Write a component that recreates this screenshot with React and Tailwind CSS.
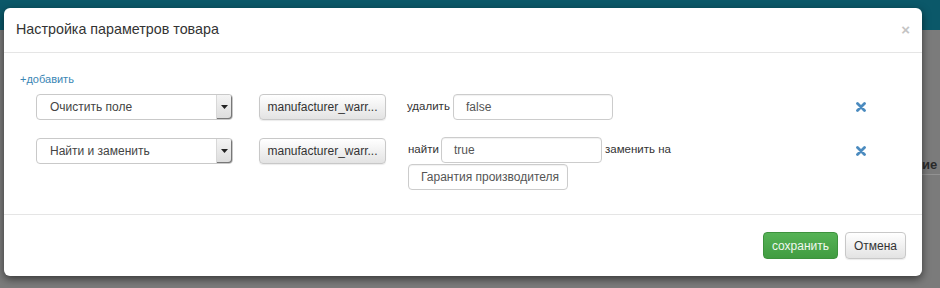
import React from "react";

const font = { fontFamily: '"Liberation Sans", Arial, sans-serif' };

function SelectBox({ label }) {
  return (
    <div className="flex h-[26px] w-[197px] items-stretch rounded-[4px] border border-[#c9c9c9] bg-white">
      <div className="flex flex-1 items-center pl-[13px] text-[12px] text-[#444]">{label}</div>
      <div className="flex w-[16px] items-center justify-center rounded-r-[3px] border-l border-[#d8d8d8] bg-gradient-to-b from-[#f4f4f4] to-[#dcdcdc] shadow-[inset_-1px_-1px_0_#777]">
        <svg width="7" height="4" viewBox="0 0 7 4">
          <path d="M0 0 H7 L3.5 4 Z" fill="#222" />
        </svg>
      </div>
    </div>
  );
}

function GrayButton({ children, className = "" }) {
  return (
    <div
      className={
        "flex items-center justify-center rounded-[4px] border border-[#c8c8c8] bg-gradient-to-b from-[#ffffff] to-[#e3e3e3] text-[12px] text-[#333] shadow-[0_1px_1px_rgba(0,0,0,0.08)] " +
        className
      }
    >
      {children}
    </div>
  );
}

function TextInput({ value, className = "" }) {
  return (
    <div
      className={
        "flex h-[26px] items-center rounded-[4px] border border-[#cccccc] bg-white pl-[12px] text-[12px] text-[#555] shadow-[inset_0_1px_1px_rgba(0,0,0,0.06)] " +
        className
      }
    >
      {value}
    </div>
  );
}

function RemoveIcon() {
  return (
    <svg width="10" height="10" viewBox="0 0 10 10">
      <path d="M1.5 1.5 L8.5 8.5 M8.5 1.5 L1.5 8.5" stroke="#4b8bbf" strokeWidth="2.8" strokeLinecap="round" />
    </svg>
  );
}

export default function App() {
  return (
    <div className="relative h-[288px] w-[940px] overflow-hidden bg-[#7b7b7b]" style={font}>
      <div className="absolute left-0 top-0 h-[30px] w-full bg-[#0b5869]" />
      <div className="absolute left-[922px] top-[155px] text-[13px] font-bold text-[#2a2a2a]">ие</div>
      <div className="absolute left-[922px] top-[174px] h-px w-[18px] bg-[#929292]" />

      <div className="relative ml-[4px] mt-[8px] flex h-[268px] w-[918px] flex-col rounded-[6px] bg-white shadow-[0_3px_8px_rgba(0,0,0,0.55)]">
        {/* header */}
        <div className="flex h-[45px] items-center justify-between border-b border-[#e5e5e5] pl-[12px] pr-[12px]">
          <div className="text-[14.3px] text-[#333]">Настройка параметров товара</div>
          <div className="mb-[2px] text-[15px] font-bold leading-none text-[#c4c4c4]">×</div>
        </div>

        {/* body */}
        <div className="flex h-[162px] flex-col border-b border-[#e5e5e5] pt-[19px]">
          <div className="pl-[16px] text-[11px] leading-[14px] text-[#3a86b4]">+добавить</div>

          <div className="mt-[8px] flex items-center">
            <div className="ml-[32px]">
              <SelectBox label="Очистить поле" />
            </div>
            <GrayButton className="ml-[26px] h-[26px] w-[127px]">manufacturer_warr...</GrayButton>
            <div className="ml-[21px] flex items-center">
              <span className="w-[46px] text-[11.5px] text-[#333]">удалить</span>
              <TextInput value="false" className="w-[160px]" />
            </div>
            <div className="ml-auto mr-[56px] flex items-center">
              <RemoveIcon />
            </div>
          </div>

          <div className="mt-[18px] flex items-start">
            <div className="ml-[32px]">
              <SelectBox label="Найти и заменить" />
            </div>
            <GrayButton className="ml-[26px] h-[26px] w-[127px]">manufacturer_warr...</GrayButton>
            <div className="ml-[22px] flex flex-col">
              <div className="-mt-[1px] flex items-center">
                <span className="w-[33px] text-[11.5px] text-[#333]">найти</span>
                <TextInput value="true" className="w-[161px]" />
                <span className="ml-[3px] text-[11.5px] text-[#333]">заменить на</span>
              </div>
              <TextInput value="Гарантия производителя" className="mt-[1px] w-[160px]" />
            </div>
            <div className="ml-auto mr-[56px] mt-[8px] flex items-center">
              <RemoveIcon />
            </div>
          </div>
        </div>

        {/* footer */}
        <div className="flex flex-1 items-start justify-end gap-[7px] pr-[16px] pt-[17px]">
          <div className="flex h-[27px] w-[75px] items-center justify-center rounded-[4px] border border-[#3d923d] bg-gradient-to-b from-[#56b356] to-[#419c41] text-[12px] text-[#f0f8f0]">
            сохранить
          </div>
          <GrayButton className="h-[27px] w-[61px]">Отмена</GrayButton>
        </div>
      </div>
    </div>
  );
}
